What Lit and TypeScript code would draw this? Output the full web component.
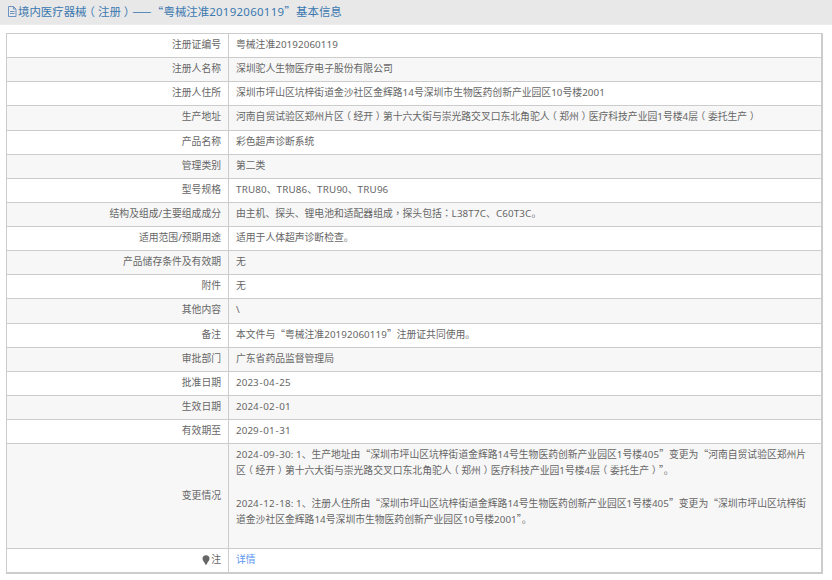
import { LitElement, html, css } from "lit";
import { customElement } from "lit/decorators.js";

const rows: [string, string][] = [
  ["注册证编号", "粤械注准20192060119"],
  ["注册人名称", "深圳驼人生物医疗电子股份有限公司"],
  ["注册人住所", "深圳市坪山区坑梓街道金沙社区金辉路14号深圳市生物医药创新产业园区10号楼2001"],
  ["生产地址", "河南自贸试验区郑州片区（经开）第十六大街与崇光路交叉口东北角驼人（郑州）医疗科技产业园1号楼4层（委托生产）"],
  ["产品名称", "彩色超声诊断系统"],
  ["管理类别", "第二类"],
  ["型号规格", "TRU80、TRU86、TRU90、TRU96"],
  ["结构及组成/主要组成成分", "由主机、探头、锂电池和适配器组成，探头包括：L38T7C、C60T3C。"],
  ["适用范围/预期用途", "适用于人体超声诊断检查。"],
  ["产品储存条件及有效期", "无"],
  ["附件", "无"],
  ["其他内容", "\\"],
  ["备注", "本文件与“粤械注准20192060119”注册证共同使用。"],
  ["审批部门", "广东省药品监督管理局"],
  ["批准日期", "2023-04-25"],
  ["生效日期", "2024-02-01"],
  ["有效期至", "2029-01-31"],
];

const changes: string[][] = [
  [
    "2024-09-30: 1、生产地址由“深圳市坪山区坑梓街道金辉路14号生物医药创新产业园区1号楼405”变更为“河南自贸试验区郑州片",
    "区（经开）第十六大街与崇光路交叉口东北角驼人（郑州）医疗科技产业园1号楼4层（委托生产）”。",
  ],
  [
    "2024-12-18: 1、注册人住所由“深圳市坪山区坑梓街道金辉路14号生物医药创新产业园区1号楼405”变更为“深圳市坪山区坑梓街",
    "道金沙社区金辉路14号深圳市生物医药创新产业园区10号楼2001”。",
  ],
];

const fmt = (t: string) =>
  t.split(/([“”—]+|（|）|[，：]+|[A-Z]+|\d+|-)/).map((s, i) => {
    if (i % 2 === 0) return s;
    if (/^[“”—]/.test(s)) return html`<span class="cjk">${s}</span>`;
    if (s === "（") return html`<span class="po">${s}</span>`;
    if (s === "）") return html`<span class="pc">${s}</span>`;
    if (/^[，：]/.test(s)) return html`<span class="tc">${s}</span>`;
    if (s === "-") return html`<span class="hy">${s}</span>`;
    if (/^[A-Z]/.test(s)) return html`<span class="up">${s}</span>`;
    return html`<span class="dg">${s}</span>`;
  });

@customElement("app-root")
export class AppRoot extends LitElement {
  static styles = css`
    :host {
      display: block;
      width: 832px;
      height: 580px;
      overflow: hidden;
      background: #fff;
      font-family: "Noto Sans", "Noto Sans CJK SC", sans-serif;
      font-size: 9.8px;
      line-height: 14px;
      color: #666;
    }
    .cjk { font-family: "Noto Sans CJK SC", sans-serif; line-height: 0; }
    .tc { font-family: "Noto Sans CJK TC", sans-serif; line-height: 0; }
    .po, .pc {
      display: inline-block;
      font-family: "Noto Sans CJK SC", sans-serif;
      line-height: 0;
    }
    .po { transform: translateX(-0.26em); }
    .pc { transform: translateX(0.26em); }
    .hy { padding: 0 0.7px; }
    .dg { letter-spacing: 0.1px; }
    .up { letter-spacing: 0.2px; }
    .head {
      height: 25px;
      box-sizing: border-box;
      background: #e8e8e8;
      border-bottom: 1px solid #ebebf0;
      display: flex;
      align-items: center;
      padding: 0 0 1px 7px;
      color: #3b78b0;
      font-size: 11.43px;
      gap: 1px;
      margin-bottom: 8px;
    }
    .head .dg { letter-spacing: 0.3px; }
    .head .cjk { letter-spacing: 0.3px; }
    .head svg { width: 10px; height: 11px; flex: none; }
    .wrap {
      margin: 0 9px 0 6px;
      border: 1px solid #ccc;
      border-right-width: 2px;
      border-bottom-width: 2px;
    }
    .row {
      display: grid;
      grid-template-columns: 222px 1fr;
      min-height: 23.13px;
      border-top: 1px solid #ccc;
    }
    .row:first-child { border-top: 0; }
    .row:nth-child(even) { background: #f7f7f7; }
    .k {
      display: flex;
      align-items: center;
      justify-content: flex-end;
      padding: 0 7px 1px 0;
      border-right: 1px solid #ccc;
    }
    .v {
      display: flex;
      align-items: center;
      padding: 0 0 1px 7px;
      white-space: nowrap;
    }
    .change { min-height: 104px; }
    .change .v {
      display: block;
      line-height: 16.33px;
      padding: 3px 0 0 7px;
    }
    .change .para { margin-bottom: 16px; }
    .k svg { width: 8px; height: 10px; margin-right: 1px; flex: none; }
    a { color: #5b96f0; text-decoration: none; }
  `;

  render() {
    return html`
      <div class="head">
        <svg viewBox="0 0 10 11" fill="none" stroke="#6d93c2" stroke-width="1">
          <path d="M1.500.5h5l2.500 2.500v7.500h-7.500z M6.500.5v2.500h2.500 M3 5.500h4.500 M3 7.500h4.500" />
        </svg>
        <span>${fmt("境内医疗器械（注册）——“粤械注准20192060119”基本信息")}</span>
      </div>
      <div class="wrap">
        ${rows.map(
          ([k, v]) => html`<div class="row"><div class="k">${k}</div><div class="v"><span>${fmt(v)}</span></div></div>`
        )}
        <div class="row change">
          <div class="k">变更情况</div>
          <div class="v">
            ${changes.map(
              (lines) => html`<div class="para">${lines.map((l) => html`<div>${fmt(l)}</div>`)}</div>`
            )}
          </div>
        </div>
        <div class="row">
          <div class="k">
            <svg viewBox="0 0 8 10"><path fill="#666" d="M4 .3a3.500 3.500 0 0 1 3.500 3.500c0 2-2.200 3.500-3 5.900h-1C2.700 7.300.5 5.800.5 3.800A3.500 3.500 0 0 1 4 .3z" /></svg>注
          </div>
          <div class="v"><a href="#">详情</a></div>
        </div>
      </div>
    `;
  }
}
